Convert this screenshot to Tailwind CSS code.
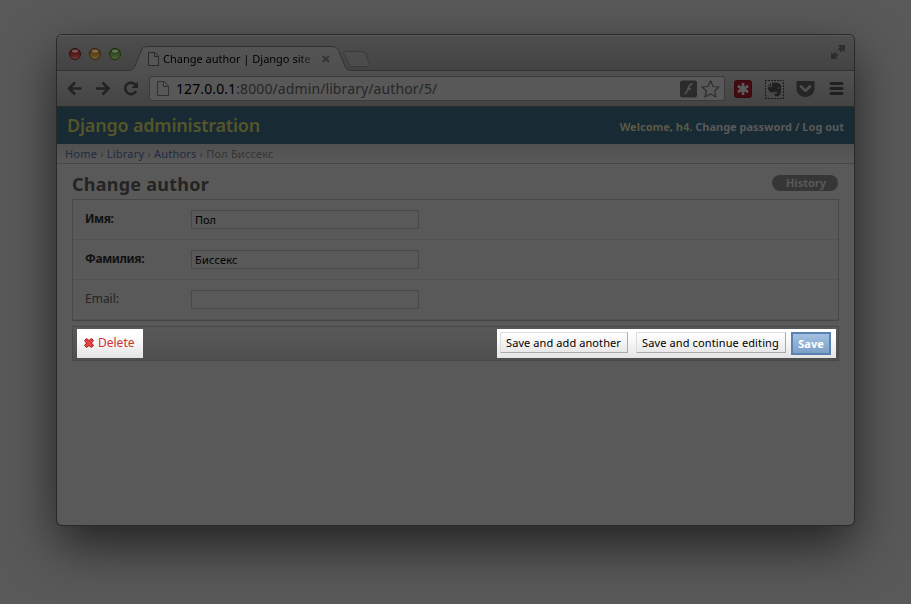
<!DOCTYPE html>
<html lang="en">
<head>
<meta charset="utf-8">
<title>Change author | Django site admin</title>
<script src="https://cdn.jsdelivr.net/npm/@tailwindcss/browser@4"></script>
</head>
<body class="h-[604px] w-[911px] overflow-hidden bg-[#595959] pt-[35px] pl-[57px] font-['Noto_Sans','DejaVu_Sans',sans-serif] text-[11px] text-black">
<div class="flex h-[490px] w-[797px] flex-col overflow-hidden rounded-[5px] bg-[#595959] shadow-[0_0_0_1px_#292929,0_20px_50px_rgba(0,0,0,0.62)]">

  <!-- Tab strip -->
  <div class="relative flex h-[36px] shrink-0 items-start bg-linear-to-b from-[#4e4e4e] to-[#434343] shadow-[inset_0_1px_0_#5a5a5a]">
    <svg class="absolute inset-0" width="797" height="36" viewBox="0 0 797 36" fill="none">
      <defs>
        <linearGradient id="tab" x1="0" y1="11" x2="0" y2="36" gradientUnits="userSpaceOnUse"><stop stop-color="#545454"/><stop offset="1" stop-color="#505050"/></linearGradient>
        <linearGradient id="r" x1="0" y1="0" x2="0" y2="1"><stop stop-color="#3c1210"/><stop offset=".5" stop-color="#551b19"/><stop offset="1" stop-color="#6c3835"/></linearGradient>
        <linearGradient id="y" x1="0" y1="0" x2="0" y2="1"><stop stop-color="#4a2e10"/><stop offset=".5" stop-color="#614119"/><stop offset="1" stop-color="#6d5d2f"/></linearGradient>
        <linearGradient id="g" x1="0" y1="0" x2="0" y2="1"><stop stop-color="#20360f"/><stop offset=".5" stop-color="#314d24"/><stop offset="1" stop-color="#4d6837"/></linearGradient>
      </defs>
      <path d="M0 35.500H71C77 35.500 78 31 79.500 27L84 16C85.500 12.500 87 11.500 91 11.500H274C279 11.500 280.500 13 282 17L287 29C289 34 290 35.500 295 35.500H797V36H0Z" fill="url(#tab)"/>
      <path d="M0 35.500H71M295 35.500H797" stroke="#323232"/>
      <path d="M71 35.500C77 35.500 78 31 79.500 27L84 16C85.500 12.500 87 11.500 91 11.500H274C279 11.500 280.500 13 282 17L287 29C289 34 290 35.500 295 35.500" stroke="#323232"/>
      <path d="M288.500 16.500H304C307 16.500 308 17 309 19.500L312.500 29C313 31 312.500 31.500 311 31.500H296C294 31.500 293 31 292 29L286.500 18.500C286 17 287 16.500 288.500 16.500Z" fill="#4c4c4c" stroke="#3a3a3a"/>
      <g stroke-width="1">
        <circle cx="18" cy="19" r="5.600" fill="url(#r)" stroke="#2c1716"/>
        <circle cx="38" cy="19" r="5.600" fill="url(#y)" stroke="#38280f"/>
        <circle cx="58" cy="19" r="5.600" fill="url(#g)" stroke="#20310f"/>
      </g>
      <g fill="#fff" fill-opacity=".28"><ellipse cx="18" cy="16" rx="3" ry="1.500"/><ellipse cx="38" cy="16" rx="3" ry="1.500"/><ellipse cx="58" cy="16" rx="3" ry="1.500"/></g>
      <path d="M91.500 17.500H98L101.500 21V30.500H91.500ZM97.500 17.500V21.500H101.500" fill="#565656" stroke="#2a2a2a"/>
      <path d="M265.500 21L272 27M272 21L265.500 27" stroke="#353535" stroke-width="2"/>
      <path d="M781 10H788V17L786 15L783.500 17.500L780.500 14.500L783 12ZM774 24V17L776 19L778.500 16.500L781.500 19.500L779 22L781 24Z" fill="#2d2d2d"/>
      <path d="M779 19L783 15" stroke="#484848" stroke-width="1.500"/>
    </svg>
    <span class="relative mt-[15px] ml-[106px] w-[152px] bg-linear-to-r from-black from-85% to-[#484848] bg-clip-text text-[11px] leading-[18px] whitespace-nowrap text-transparent">Change author | Django site</span>
  </div>

  <!-- Toolbar -->
  <div class="flex h-[36px] shrink-0 items-center border-b border-[#2c2c2c] bg-linear-to-b from-[#505050] to-[#444444]">
    <svg class="shrink-0" width="92" height="35" viewBox="0 0 92 35" fill="none" stroke="#232323" stroke-width="2.600">
      <path d="M24.500 17.500H12M18 11.500L12 17.500L18 23.500"/>
      <path d="M39 17.500H51.500M45.500 11.500L51.500 17.500L45.500 23.500"/>
      <path d="M78.500 14A5.700 5.700 0 1 0 79 20"/>
      <path d="M81 10.500V17H74.500Z" fill="#232323" stroke="none"/>
    </svg>
    <div class="flex h-[25px] w-[576px] shrink-0 items-center rounded-[3px] border border-[#3a3a3a] bg-[#585858]">
      <svg class="ml-[7px] shrink-0" width="12" height="16" viewBox="0 0 12 16" fill="none" stroke="#303030"><path d="M.5 .5H7L11.500 5V14.500H.5ZM6.500 .5V5.500H11.500"/></svg>
      <div class="ml-[7px] flex-1 text-[14px] leading-5 tracking-[0.1px] whitespace-nowrap text-[#262626]"><span class="text-black">127.0.0.1</span>:8000/admin/library/author/5/</div>
      <svg class="mr-[4px] shrink-0" width="40" height="20" viewBox="0 0 40 20" fill="none">
        <rect x="0" y="1.500" width="17" height="17" rx="2.500" fill="#2b2b2b"/>
        <path d="M12.500 5C9.500 5 9 7.500 8 10C7.200 12.500 6.500 14.500 4.500 14.800M7 10H11" stroke="#505050" stroke-width="1.800"/>
        <path d="M30.500 1.800L33 7.500L39 8L34.500 12L36 18L30.500 14.900L25 18L26.500 12L22 8L28 7.500Z" stroke="#2e2e2e" stroke-width="1.200" stroke-linejoin="round"/>
      </svg>
    </div>
    <svg class="ml-[9px] shrink-0" width="114" height="22" viewBox="0 0 114 22" fill="none">
      <rect x=".5" y="2.500" width="17" height="17" rx="2" fill="#430b10" stroke="#380a0d"/>
      <path d="M9 5V17M3.800 8L14.200 14M14.200 8L3.800 14" stroke="#5b5b5b" stroke-width="2.600"/>
      <path d="M31 2.500H50M31 20.500H50" stroke="#1d1d1d" stroke-dasharray="2 1"/>
      <path d="M31.500 4V20M49.500 4V20" stroke="#1d1d1d" stroke-dasharray="2 1"/>
      <path d="M38 4.500H42C44 5 47 5.500 47 8C47.500 12 46.500 18 44 18.300C41 18.500 40 17.500 41 15.500H43.500C43 13.500 41.500 13.500 40 14.300C37 14.800 34 14 34 9H38Z" fill="#202020"/>
      <path d="M34 8L37 5V8Z" fill="#202020"/><path d="M43.500 9.500h2v1h-2z" fill="#484848"/>
      <path d="M62.500 3H80.500V10C80.500 15.500 76.500 19 71.500 19S62.500 15.500 62.500 10Z" fill="#252525"/>
      <path d="M67 8.500L71.500 12.700L76 8.500" stroke="#505050" stroke-width="2.600" stroke-linecap="round" stroke-linejoin="round"/>
      <path d="M97 5.500H108M97 10.500H108M97 15.500H108" stroke="#202020" stroke-width="3" stroke-linecap="round"/>
    </svg>
  </div>

  <!-- Site header -->
  <header class="flex h-[37px] shrink-0 items-center justify-between bg-[#182a33] pr-[10px] pl-[10px]">
    <h1 class="pb-[2px] text-[18px] leading-6 font-semibold tracking-[-0.2px] text-[#55552a]">Django administration</h1>
    <div class="pt-[3px] font-bold text-[#595947]">Welcome, h4. <a class="text-[#595959]">Change password</a> / <a class="text-[#595959]">Log out</a></div>
  </header>

  <nav class="flex h-[20px] shrink-0 items-center border-b border-[#454545] bg-linear-to-b from-[#505050] to-[#595959] pt-px pl-[8px] text-[11px] tracking-[0.2px] whitespace-pre text-[#353535]"><a class="text-[#202b42]">Home</a> › <a class="text-[#202b42]">Library</a> › <a class="text-[#202b42]">Authors</a> › Пол Биссекс</nav>

  <!-- Change form -->
  <main class="flex flex-col pt-[7px] pr-[15px] pl-[15px]">
    <div class="flex h-[28px] items-start justify-between">
      <h2 class="text-[18px] leading-[26px] font-bold tracking-[0.25px] text-[#242424]">Change author</h2>
      <a class="mt-[4px] mr-px flex h-[16px] w-[66px] items-center justify-center rounded-full bg-[#363636] pl-[2px] font-bold text-[#595959]">History</a>
    </div>
    <form class="flex flex-col">
      <fieldset class="flex h-[122px] w-[767px] flex-col border border-[#484848] border-b-[#454545] text-[12px]">
        <label class="flex h-[40px] items-center border-b border-[#525252] pl-[12px]"><span class="w-[106px] pb-[2px] font-bold tracking-[-0.4px] text-[#121212]">Имя:</span><span class="flex h-[19px] w-[228px] items-center border border-[#484848] pt-px pl-[3px] text-[11px]">Пол</span></label>
        <label class="flex h-[40px] items-center border-b border-[#525252] pl-[12px]"><span class="w-[106px] pb-[2px] font-bold tracking-[-0.4px] text-[#121212]">Фамилия:</span><span class="flex h-[19px] w-[228px] items-center border border-[#484848] pt-px pl-[3px] text-[11px] tracking-[0.2px]">Биссекс</span></label>
        <label class="flex h-[40px] items-center border-b border-[#525252] pl-[12px]"><span class="w-[106px] pb-[2px] text-[#242424]">Email:</span><span class="h-[19px] w-[228px] border border-[#484848]"></span></label>
      </fieldset>
      <div class="mt-[5px] flex h-[35px] w-[767px] items-start justify-between border border-[#484848] bg-linear-to-b from-[#595959] to-[#4f4f4f] pt-[2px] pr-[2px] pl-[4px]">
        <a class="flex h-[29px] w-[66px] items-center bg-linear-to-b from-white from-20% to-[#e4e4e4] pl-[7px] text-[12px] text-[#cc3434]">
          <svg class="mr-[4px] mb-px" width="10" height="10" viewBox="0 0 10 10"><path d="M2.500 .5L5 2.500L7.500 .5L9.500 2.500L7.500 5L9.500 7.500L7.500 9.500L5 7.500L2.500 9.500L.5 7.500L2.500 5L.5 2.500Z" fill="#e34444" stroke="#a51c1c"/></svg>
          <span class="pb-px">Delete</span>
        </a>
        <div class="flex h-[29px] w-[339px] items-start bg-linear-to-b from-white from-20% to-[#e4e4e4] pt-[3px] pl-[3px]">
          <button type="button" class="h-[21px] w-[128px] border border-t-[#ddd] border-r-[#aaa] border-b-[#aaa] border-l-[#ddd] bg-linear-to-b from-white to-[#e8e8e8] pr-px text-[11px] leading-[18px] tracking-[0.09px]">Save and add another</button>
          <button type="button" class="ml-[8px] h-[21px] w-[150px] border border-t-[#ddd] border-r-[#aaa] border-b-[#aaa] border-l-[#ddd] bg-linear-to-b from-white to-[#e8e8e8] pr-px text-[11px] leading-[18px] tracking-[0.12px]">Save and continue editing</button>
          <button type="button" class="ml-[5px] h-[23px] w-[40px] border-2 border-[#5b80b2] bg-linear-to-b from-[#a3c1e2] to-[#7ca0c7] text-[11px] leading-[19px] font-bold text-white">Save</button>
        </div>
      </div>
    </form>
  </main>
</div>
</body>
</html>
